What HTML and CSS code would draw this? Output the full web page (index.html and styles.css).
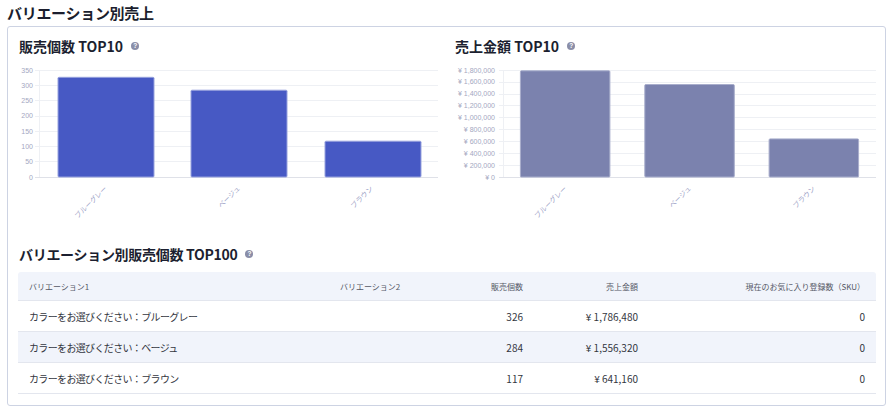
FILE: index.html
```html
<!DOCTYPE html>
<html lang="ja">
<head>
<meta charset="utf-8">
<title>バリエーション別売上</title>
<link rel="stylesheet" href="styles.css">
</head>
<body>
<h1 class="page-title">バリエーション別売上</h1>
<section class="card">
  <div class="charts">
    <div class="chart-panel chart-left">
      <h2 class="section-title">販売個数 TOP10 <span class="help">?</span></h2>
      <svg class="chart" width="428" height="188" viewBox="0 0 428 188">
        <g class="grid">
          <line x1="17" x2="420" y1="14.5" y2="14.5"/>
          <line x1="17" x2="420" y1="29.5" y2="29.5"/>
          <line x1="17" x2="420" y1="44.5" y2="44.5"/>
          <line x1="17" x2="420" y1="60.5" y2="60.5"/>
          <line x1="17" x2="420" y1="75.5" y2="75.5"/>
          <line x1="17" x2="420" y1="90.5" y2="90.5"/>
          <line x1="17" x2="420" y1="105.5" y2="105.5"/>
          <line x1="21.5" x2="21.5" y1="14" y2="121"/>
        </g>
        <line class="axis" x1="17" x2="420" y1="121.5" y2="121.5"/>
        <g class="ylab">
          <text x="15" y="16.5">350</text>
          <text x="15" y="31.8">300</text>
          <text x="15" y="47.1">250</text>
          <text x="15" y="62.4">200</text>
          <text x="15" y="77.6">150</text>
          <text x="15" y="92.9">100</text>
          <text x="15" y="108.2">50</text>
          <text x="15" y="123.5">0</text>
        </g>
        <g class="bar-a">
          <rect x="40" y="21.3" width="96" height="99.7" rx="1"/>
          <rect x="173" y="34.2" width="96" height="86.8" rx="1"/>
          <rect x="307" y="85.2" width="96" height="35.8" rx="1"/>
        </g>
        <g class="xlab">
          <text x="89.5" y="133" transform="rotate(-45 89.5 133)">ブルーグレー</text>
          <text x="222.5" y="133" transform="rotate(-45 222.5 133)">ベージュ</text>
          <text x="355.5" y="133" transform="rotate(-45 355.5 133)">ブラウン</text>
        </g>
      </svg>
    </div>
    <div class="chart-panel chart-right">
      <h2 class="section-title">売上金額 TOP10 <span class="help">?</span></h2>
      <svg class="chart" width="421" height="188" viewBox="0 0 421 188">
        <g class="grid">
          <line x1="44" x2="421" y1="14.5" y2="14.5"/>
          <line x1="44" x2="421" y1="26.5" y2="26.5"/>
          <line x1="44" x2="421" y1="38.5" y2="38.5"/>
          <line x1="44" x2="421" y1="49.5" y2="49.5"/>
          <line x1="44" x2="421" y1="61.5" y2="61.5"/>
          <line x1="44" x2="421" y1="73.5" y2="73.5"/>
          <line x1="44" x2="421" y1="85.5" y2="85.5"/>
          <line x1="44" x2="421" y1="97.5" y2="97.5"/>
          <line x1="44" x2="421" y1="109.5" y2="109.5"/>
          <line x1="48.5" x2="48.5" y1="14" y2="121"/>
        </g>
        <line class="axis" x1="44" x2="421" y1="121.5" y2="121.5"/>
        <g class="ylab">
          <text x="40" y="16.5">¥ 1,800,000</text>
          <text x="40" y="28.4">¥ 1,600,000</text>
          <text x="40" y="40.3">¥ 1,400,000</text>
          <text x="40" y="52.2">¥ 1,200,000</text>
          <text x="40" y="64.1">¥ 1,000,000</text>
          <text x="40" y="75.9">¥ 800,000</text>
          <text x="40" y="87.8">¥ 600,000</text>
          <text x="40" y="99.7">¥ 400,000</text>
          <text x="40" y="111.6">¥ 200,000</text>
          <text x="40" y="123.5">¥ 0</text>
        </g>
        <g class="bar-b">
          <rect x="65.4" y="14.8" width="89.5" height="106.2" rx="1"/>
          <rect x="189.8" y="28.5" width="89.5" height="92.5" rx="1"/>
          <rect x="314.1" y="82.9" width="89.5" height="38.1" rx="1"/>
        </g>
        <g class="xlab">
          <text x="112.2" y="133" transform="rotate(-45 112.2 133)">ブルーグレー</text>
          <text x="236.5" y="133" transform="rotate(-45 236.5 133)">ベージュ</text>
          <text x="360.8" y="133" transform="rotate(-45 360.8 133)">ブラウン</text>
        </g>
      </svg>
    </div>
  </div>

  <h2 class="section-title table-title">バリエーション別販売個数 TOP100 <span class="help">?</span></h2>
  <div class="tbl">
    <div class="tr thead">
      <div class="cell">バリエーション1</div>
      <div class="cell">バリエーション2</div>
      <div class="cell num">販売個数</div>
      <div class="cell num">売上金額</div>
      <div class="cell num">現在のお気に入り登録数（SKU）</div>
    </div>
    <div class="tr">
      <div class="cell label">カラーをお選びください：ブルーグレー</div>
      <div class="cell"></div>
      <div class="cell num">326</div>
      <div class="cell num">¥ 1,786,480</div>
      <div class="cell num">0</div>
    </div>
    <div class="tr alt">
      <div class="cell label">カラーをお選びください：ベージュ</div>
      <div class="cell"></div>
      <div class="cell num">284</div>
      <div class="cell num">¥ 1,556,320</div>
      <div class="cell num">0</div>
    </div>
    <div class="tr">
      <div class="cell label">カラーをお選びください：ブラウン</div>
      <div class="cell"></div>
      <div class="cell num">117</div>
      <div class="cell num">¥ 641,160</div>
      <div class="cell num">0</div>
    </div>
  </div>
</section>
</body>
</html>
```
FILE: styles.css
```css
* { box-sizing: border-box; }

html, body {
  margin: 0;
  padding: 0;
  background: #ffffff;
}

body {
  width: 896px;
  height: 413px;
  overflow: hidden;
  font-family: "Noto Sans CJK JP", "Noto Sans", sans-serif;
  color: #1c1f30;
}

.page-title {
  margin: 0;
  height: 26px;
  line-height: 26px;
  padding-left: 7px;
  font-size: 15px;
  font-weight: 700;
  letter-spacing: -0.3px;
  color: #1b1e2e;
}

.card {
  margin: 0 10px 0 7px;
  border: 1px solid #cdd3e3;
  border-radius: 3px;
  padding: 9px 9px 11px 10px;
}

.charts {
  display: grid;
  grid-template-columns: 428px 421px;
  column-gap: 9px;
}

.chart-left .section-title { padding-left: 1px; }

.section-title {
  margin: 0;
  height: 20px;
  line-height: 20px;
  display: flex;
  align-items: center;
  gap: 8px;
  font-size: 14px;
  font-weight: 700;
  color: #1c1f30;
  white-space: nowrap;
}

.table-title {
  padding-left: 1px;
  margin-bottom: 8px;
  letter-spacing: -0.3px;
}

.help {
  display: inline-flex;
  align-items: center;
  justify-content: center;
  width: 8px;
  height: 8px;
  border-radius: 50%;
  background: #8a8ea8;
  color: #ffffff;
  font-family: "Liberation Sans", sans-serif;
  font-size: 6.5px;
  font-weight: 700;
  line-height: 8px;
  letter-spacing: 0;
}

.chart {
  display: block;
}

.grid line {
  stroke: #eef0f4;
  stroke-width: 1;
}

.axis {
  stroke: #dfe1e8;
  stroke-width: 1;
}

.ylab text {
  font-family: "Liberation Sans", "Noto Sans CJK JP", sans-serif;
  font-size: 7px;
  fill: #a4a7bf;
  text-anchor: end;
}

.xlab text {
  font-family: "Liberation Sans", "Noto Sans CJK JP", sans-serif;
  font-size: 7px;
  fill: #9ca1c6;
  text-anchor: end;
}

.bar-a rect {
  fill: #4759c4;
  stroke: #98a3de;
  stroke-width: 1;
}

.bar-b rect {
  fill: #7b82ae;
  stroke: #a9aecc;
  stroke-width: 1;
}

.tbl {
  border-bottom: 1px solid #e3e6ee;
}

.tr {
  display: grid;
  grid-template-columns: 311px 91px 114px 115px 1fr;
  align-items: center;
  height: 31px;
  border-top: 1px solid #e3e6ee;
  font-size: 10px;
  color: #333640;
}

.tr.alt {
  background: #f1f4fb;
}

.tr.thead {
  height: 28px;
  border-top: none;
  background: #f1f4fb;
  border-radius: 3px 3px 0 0;
  font-size: 8px;
  color: #555866;
}

.cell {
  padding: 0 11px;
  white-space: nowrap;
}

.cell.label {
  letter-spacing: -0.65px;
}

.cell.num {
  text-align: right;
}
```
